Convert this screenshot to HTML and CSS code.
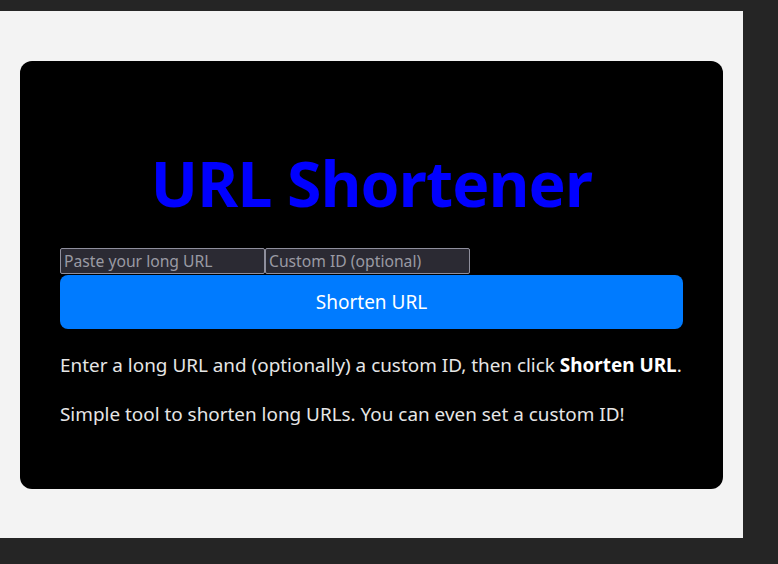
FILE: index.html
```html
<!DOCTYPE html>
<html lang="en">
<head>
<meta charset="utf-8">
<title>URL Shortener</title>
<link rel="stylesheet" href="styles.css">
</head>
<body>
<div class="page">
  <main class="card">
    <h1 class="title">URL Shortener</h1>
    <form class="form">
      <div class="fields">
        <input class="field" type="text" placeholder="Paste your long URL">
        <input class="field" type="text" placeholder="Custom ID (optional)">
      </div>
      <button class="btn" type="button">Shorten URL</button>
    </form>
    <p class="text">Enter a long URL and (optionally) a custom ID, then click <strong>Shorten URL</strong>.</p>
    <p class="text">Simple tool to shorten long URLs. You can even set a custom ID!</p>
  </main>
</div>
</body>
</html>
```
FILE: styles.css
```css
html, body {
  margin: 0;
  padding: 0;
  background: #252525;
  height: 100%;
}
body {
  font-family: "Noto Sans", "Open Sans", sans-serif;
}
.page {
  margin-top: 11px;
  width: 743px;
  height: 527px;
  box-sizing: border-box;
  background: #f3f3f3;
  padding: 50px 20px;
}
.card {
  background: #000;
  border-radius: 12px;
  height: 428px;
  box-sizing: border-box;
  padding: 84px 40px 30px;
  color: #e6e6e6;
}
.title {
  margin: 0 0 27px;
  text-align: center;
  color: #0000ff;
  font-size: 62.5px;
  font-weight: 700;
  line-height: 76px;
  letter-spacing: -0.8px;
}
.form {
  display: flex;
  flex-direction: column;
}
.fields {
  display: flex;
}
.field {
  width: 205px;
  height: 26px;
  box-sizing: border-box;
  margin: 0;
  padding: 0 3px;
  background: #2b2a33;
  border: 1px solid #8f8f9d;
  border-radius: 2px;
  color: #fbfbfe;
  font-family: inherit;
  font-size: 15.7px;
}
.field::placeholder {
  color: #9a9aa3;
  opacity: 1;
}
.btn {
  margin-top: 1px;
  height: 54px;
  border: none;
  border-radius: 8px;
  background: #007bff;
  color: #fff;
  font-family: inherit;
  font-size: 19px;
  cursor: pointer;
}
.text {
  margin: 24px 0 0;
  font-size: 18.9px;
  line-height: 25px;
  color: #e6e6e6;
}
.text + .text {
  margin-top: 24px;
}
.text strong {
  color: #fff;
}
```
